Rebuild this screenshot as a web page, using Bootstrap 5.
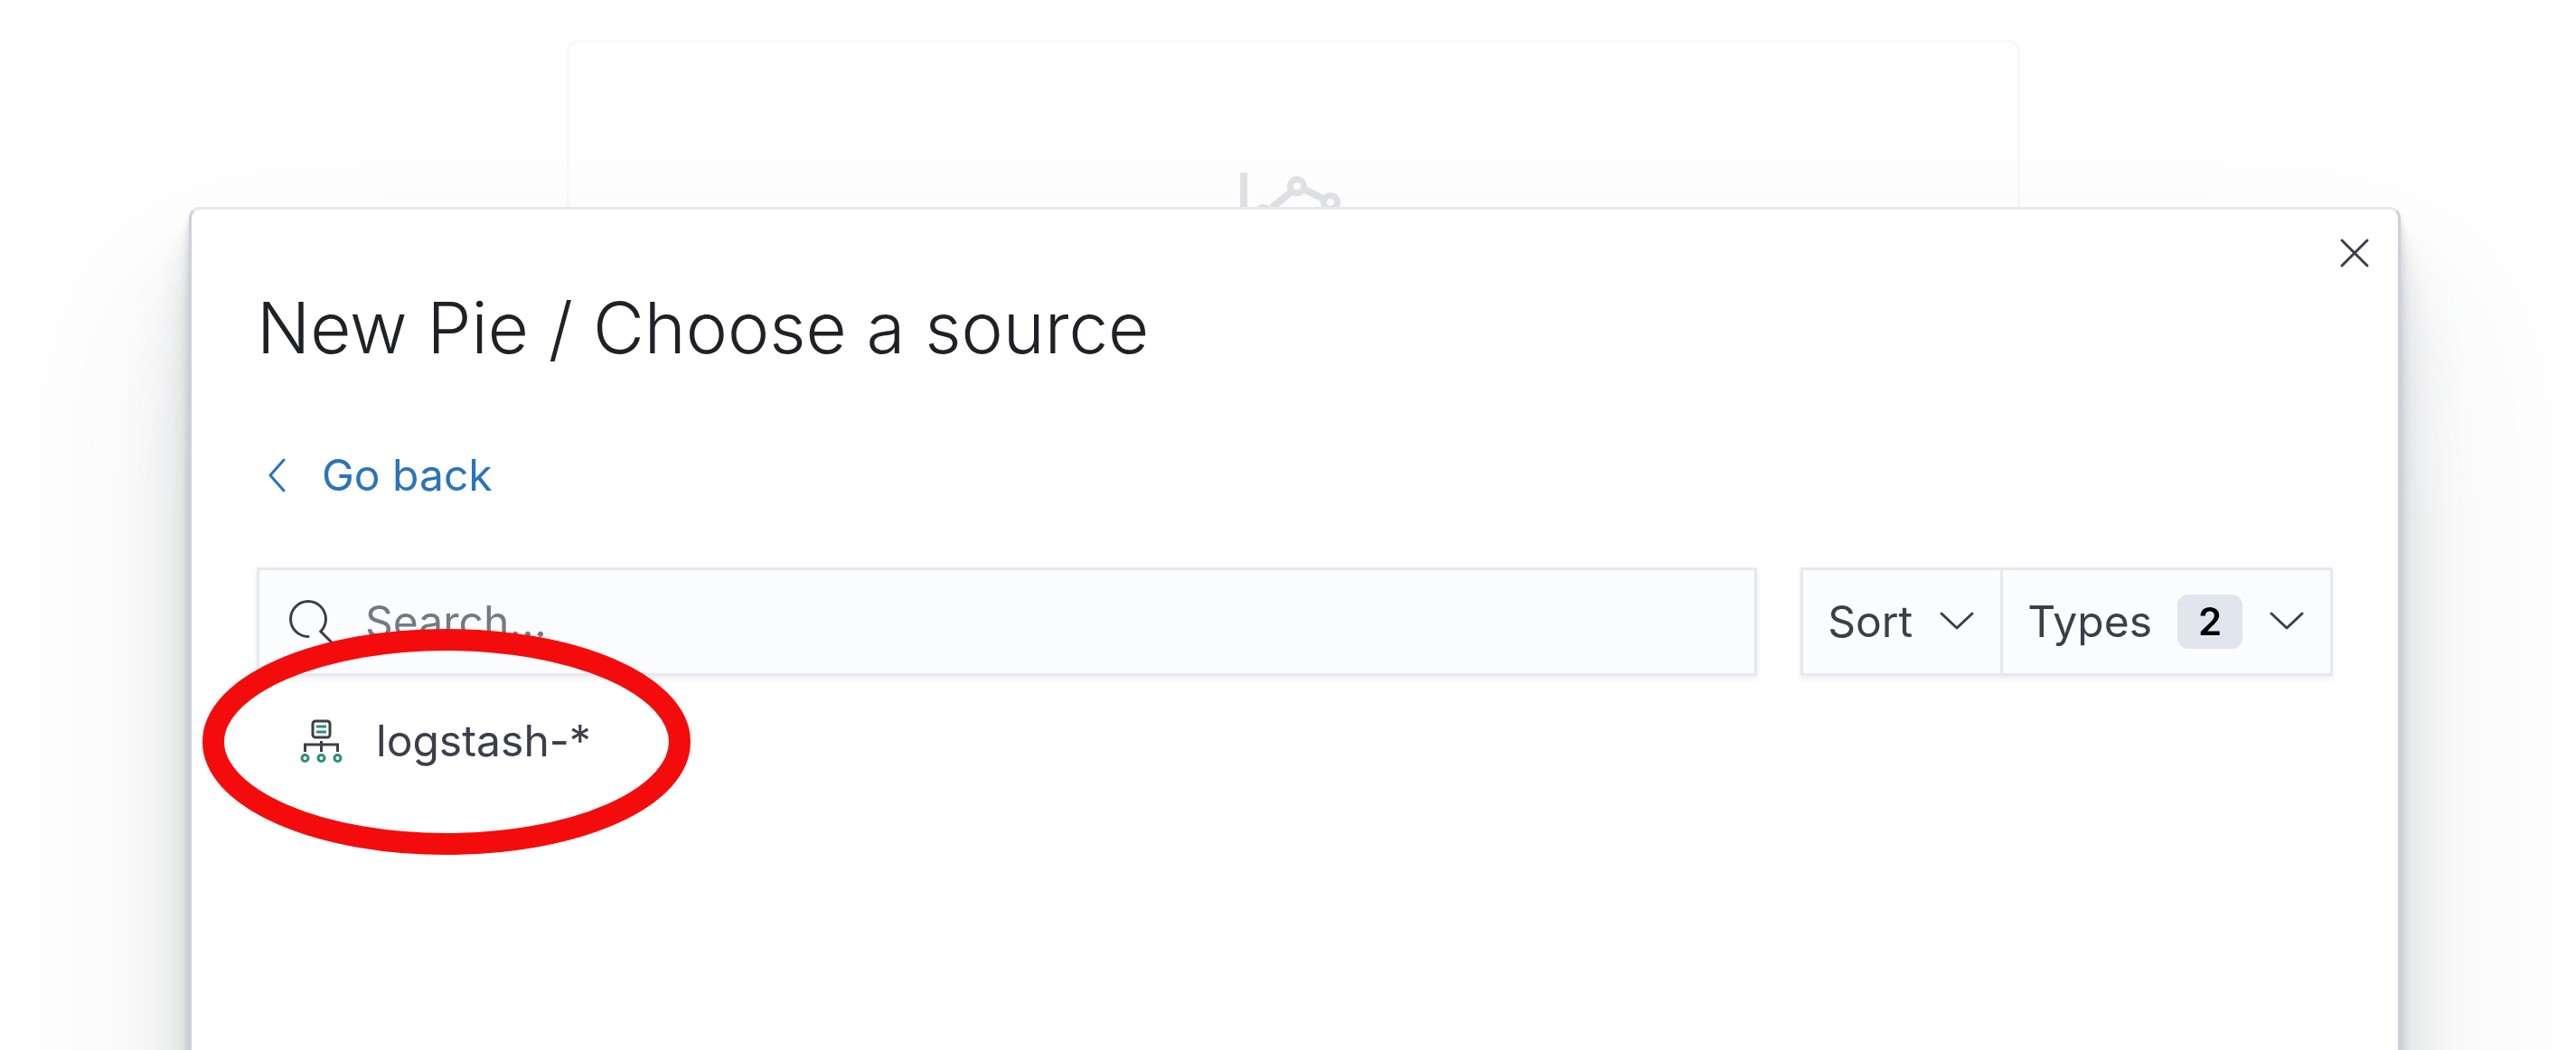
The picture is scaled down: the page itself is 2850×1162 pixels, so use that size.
<!DOCTYPE html>
<html lang="en">
<head>
<meta charset="utf-8">
<meta name="viewport" content="width=device-width, initial-scale=1">
<title>New Pie / Choose a source</title>
<link href="https://cdn.jsdelivr.net/npm/bootstrap@5.3.0/dist/css/bootstrap.min.css" rel="stylesheet">
<style>
  body { font-family: Inter, "Liberation Sans", sans-serif; font-size: 48px; line-height: 72px; color: #3c3f49; background: #fefefe; overflow: hidden; }
  svg { display: block; flex: none; }
  .empty-panel { margin: 44px 615px 0 627px; height: 600px; padding-top: 141px; border: 3px solid #f7f8fb; border-radius: 12px; background: #fefefe; }
  .source-modal { overflow: hidden; }
  .source-dialog { max-width: none; margin: 229px 194px 0 209px; }
  .source-panel { min-height: 1300px; padding: 78px 72px; color: inherit; background: #fff; border: 3px solid #cdd0d9; border-top-color: #e8e9ee; border-radius: 12px;
    box-shadow: 0 120px 192px rgba(65,78,101,.1), 0 72px 96px rgba(65,78,101,.1), 0 48px 48px rgba(65,78,101,.1), 0 24px 24px rgba(65,78,101,.1), 0 12px 12px rgba(65,78,101,.1), 0 6px 6px rgba(65,78,101,.1); }
  .source-title { font-size: 78px; line-height: 105px; font-weight: 300; color: #1f2126; margin-bottom: 75px; }
  .close-button { position: absolute; top: 12px; right: 12px; padding: 18px; color: #3c3f49; }
  .back-link { color: #2b74b9; gap: 36px; padding-left: 12px; margin-bottom: 66px; }
  .finder-bar { gap: 48px; margin-bottom: 36px; }
  .search-box { height: 120px; padding: 0 33px; gap: 36px; background: #fbfcfd; border: 3px solid #e6e8f0; box-shadow: 0 3px 6px rgba(152,162,179,.2); }
  .search-box input { font-size: 48px; line-height: 72px; padding: 0; color: #3c3f49; }
  .search-box input::placeholder { color: #737985; opacity: 1; }
  .filter-set { height: 120px; background: #fbfcfd; border: 3px solid #e6e8f0; box-shadow: 0 3px 6px rgba(152,162,179,.2); }
  .filter-set .btn { font-size: 48px; line-height: 72px; color: #3c3f49; padding: 0 27px; gap: 28px; border: 0; border-radius: 0; }
  .filter-set .btn + .btn { border-left: 3px solid #e6e8f0; }
  .type-count { font-size: 42px; line-height: 60px; font-weight: 600; color: #000; background: #e0e5ee; border-radius: 12px; width: 72px; text-align: center; }
  .source-item { position: relative; color: #3c3f49; gap: 36px; margin-left: 48px; }
  .highlight-ring { position: absolute; left: -108px; top: -88px; pointer-events: none; }
</style>
<script src="https://cdn.jsdelivr.net/npm/bootstrap@5.3.0/dist/js/bootstrap.bundle.min.js"></script>
</head>
<body>
<div class="empty-panel d-flex justify-content-center align-items-start">
  <svg width="120" height="96" viewBox="0 0 120 96" fill="none" stroke="#e0e1e4" stroke-width="8" aria-hidden="true">
    <path d="M5 3v85h110M36 42l22-18M71 21l22 11"/>
    <circle cx="27" cy="49" r="7.500" stroke-width="7"/><circle cx="64" cy="18" r="7.500" stroke-width="7"/><circle cx="101" cy="36" r="7.500" stroke-width="7"/>
  </svg>
</div>

<div class="modal d-block source-modal" role="dialog" aria-labelledby="source-title">
  <div class="modal-dialog source-dialog">
    <div class="modal-content source-panel">
      <button type="button" class="btn border-0 close-button" aria-label="Close">
        <svg width="36" height="36" viewBox="0 0 36 36" fill="none" stroke="currentColor" stroke-width="3" stroke-linecap="round"><path d="M4 4l28 28M32 4L4 32"/></svg>
      </button>
      <h1 class="source-title" id="source-title">New Pie / Choose a source</h1>
      <a href="#" class="back-link d-inline-flex align-items-center align-self-start text-decoration-none">
        <svg width="24" height="42" viewBox="0 0 24 42" fill="none" stroke="currentColor" stroke-width="3" stroke-linecap="round" stroke-linejoin="round"><path d="M18 4L3 21l15 17"/></svg>
        Go back
      </a>
      <div class="finder-bar d-flex">
        <div class="search-box d-flex flex-grow-1 align-items-center">
          <svg width="48" height="48" viewBox="0 0 16 16" fill="#3c3f49" aria-hidden="true"><path d="M11.271 11.978l3.872 3.873a.502.502 0 00.708 0 .502.502 0 000-.708l-3.565-3.564c2.38-2.747 2.267-6.923-.342-9.532-2.73-2.73-7.17-2.73-9.898 0-2.728 2.729-2.728 7.17 0 9.9a6.955 6.955 0 004.949 2.05.5.5 0 000-1 5.96 5.96 0 01-4.242-1.757 6.01 6.01 0 010-8.486 6.004 6.004 0 018.484 0 6.01 6.01 0 010 8.486.5.5 0 00-.034.738z"/></svg>
          <input type="search" class="form-control border-0 bg-transparent shadow-none" placeholder="Search..." aria-label="Search">
        </div>
        <div class="filter-set d-flex">
          <button type="button" class="btn d-flex align-items-center">Sort
            <svg width="42" height="24" viewBox="0 0 42 24" fill="none" stroke="currentColor" stroke-width="3" stroke-linecap="round" stroke-linejoin="round"><path d="M4 3l17 16L38 3"/></svg>
          </button>
          <button type="button" class="btn d-flex align-items-center">Types
            <span class="type-count">2</span>
            <svg width="42" height="24" viewBox="0 0 42 24" fill="none" stroke="currentColor" stroke-width="3" stroke-linecap="round" stroke-linejoin="round"><path d="M4 3l17 16L38 3"/></svg>
          </button>
        </div>
      </div>
      <a href="#" class="source-item d-flex align-items-center align-self-start text-decoration-none">
        <svg width="48" height="48" viewBox="0 0 48 48" fill="none" stroke="#3c3f49" stroke-width="3" aria-hidden="true">
          <rect x="14" y="2" width="19" height="18" rx="3"/>
          <path d="M5.500 36v-8h36v8M23.500 24v12"/>
          <g stroke="#2f8c80"><path d="M18 8h11M18 14h11"/><circle cx="5.500" cy="43" r="3.500"/><circle cx="23.500" cy="43" r="3.500"/><circle cx="41.500" cy="43" r="3.500"/></g>
        </svg>
        logstash-*
        <svg class="highlight-ring" width="540" height="250" viewBox="0 0 540 250" fill="none" stroke="#f40c0c" stroke-width="24" aria-hidden="true"><ellipse cx="270" cy="125" rx="258" ry="113"/></svg>
      </a>
    </div>
  </div>
</div>
</body>
</html>
